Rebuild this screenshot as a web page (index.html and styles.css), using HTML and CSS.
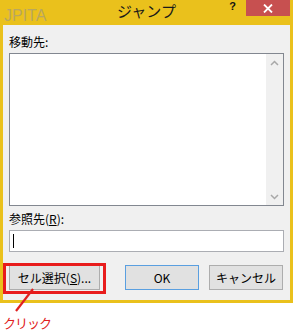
FILE: index.html
```html
<!DOCTYPE html>
<html lang="ja">
<head>
    <meta charset="UTF-8">
    <title>ジャンプ</title>
    <link rel="stylesheet" href="styles.css">
</head>
<body>
    <div class="window">
        <div class="titlebar">
            <span class="watermark">JPITA</span>
            <span class="title">ジャンプ</span>
            <div class="controls">
                <span class="help">?</span>
                <span class="close">
                    <svg width="10" height="9" viewBox="0 0 10 9"><path d="M1 0.5 L9 8.5 M9 0.5 L1 8.5" stroke="#fff" stroke-width="1.8" fill="none"/></svg>
                </span>
            </div>
        </div>
        <div class="client">
            <div class="label">移動先:</div>
            <div class="listbox">
                <div class="list-items"></div>
                <div class="scrollbar">
                    <span class="arrow">
                        <svg width="9" height="6" viewBox="0 0 9 6"><path d="M1 5 L4.5 1.5 L8 5" stroke="#a8a8a8" stroke-width="1.5" fill="none"/></svg>
                    </span>
                    <span class="track"></span>
                    <span class="arrow">
                        <svg width="9" height="6" viewBox="0 0 9 6"><path d="M1 1 L4.5 4.5 L8 1" stroke="#a8a8a8" stroke-width="1.5" fill="none"/></svg>
                    </span>
                </div>
            </div>
            <div class="label label-ref">参照先(<u>R</u>):</div>
            <div class="textbox"><span class="caret"></span></div>
            <div class="buttons">
                <button type="button" class="btn btn-pick">セル選択(<u>S</u>)...</button>
                <button type="button" class="btn btn-default">OK</button>
                <button type="button" class="btn">キャンセル</button>
            </div>
        </div>
    </div>
    <div class="note">クリック</div>

    <!-- 注釈の矢印線 -->
    <svg class="pointer" width="293" height="331" viewBox="0 0 293 331">
        <line x1="33" y1="289" x2="16" y2="311" stroke="#e02020" stroke-width="2.2"/>
    </svg>
</body>
</html>
```

FILE: styles.css
```css
body {
    margin: 0;
    width: 293px;
    height: 331px;
    background-color: #ffffff;
    font-family: "Noto Sans CJK JP", "Noto Sans", sans-serif;
    color: #000000;
    position: relative;
    overflow: hidden;
}
.window {
    background-color: #eac11c; /* タイトルバーと枠の色 */
    padding: 0 3px 3px 3px;
}
.titlebar {
    height: 25px;
    display: grid;
    grid-template-columns: 1fr auto 1fr;
    align-items: start;
}
.watermark {
    font-family: "Liberation Sans", sans-serif;
    font-size: 16px;
    line-height: 16px;
    color: #b9a75e;
    padding-top: 8px;
    padding-left: 1px;
}
.title {
    font-size: 15px;
    line-height: 22px;
    color: #1a1a1a;
}
.controls {
    display: flex;
    justify-content: flex-end;
    align-items: flex-start;
}
.help {
    font-family: "Liberation Sans", sans-serif;
    font-weight: bold;
    font-size: 11px;
    line-height: 12px;
    margin-right: 10px;
    color: #111111;
}
.close {
    width: 44px;
    height: 16px;
    background-color: #c75050;
    display: flex;
    align-items: center;
    justify-content: center;
}
.client {
    background-color: #f0f0f0;
    padding: 8px 6px 10px 6px;
    display: flex;
    flex-direction: column;
}
.label {
    font-size: 12px;
    line-height: 18px;
    margin-bottom: 2px;
}
.label-ref {
    margin-top: 4px;
}
.listbox {
    height: 151px;
    border: 1px solid #828790;
    background-color: #ffffff;
    display: flex;
}
.list-items {
    flex: 1;
}
.scrollbar {
    width: 17px;
    background-color: #f0f0f0;
    display: flex;
    flex-direction: column;
}
.arrow {
    height: 17px;
    display: flex;
    align-items: center;
    justify-content: center;
}
.track {
    flex: 1;
}
.textbox {
    height: 20px;
    border: 1px solid #abadb3;
    background-color: #ffffff;
    display: flex;
    align-items: center;
    padding-left: 3px;
}
.caret {
    width: 1px;
    height: 14px;
    background-color: #000000;
}
.buttons {
    display: flex;
    gap: 10px;
    margin-top: 13px;
    padding-right: 1px;
}
.btn {
    height: 25px;
    width: 74px;
    padding: 0;
    background-color: #e1e1e1;
    border: 1px solid #adadad;
    font-family: "Noto Sans CJK JP", "Noto Sans", sans-serif;
    font-size: 12px;
    color: #000000;
}
.btn-pick {
    width: 91px;
    margin-right: auto;
    position: relative;
}
/* 赤い枠の注釈 */
.btn-pick::after {
    content: "";
    position: absolute;
    top: -3px;
    left: -7px;
    right: -7px;
    bottom: -5px;
    border: 3px solid #e81c1c;
}
.btn-default {
    border-color: #5a9fe0;
}
.note {
    margin-top: 12px;
    padding-left: 3px;
    font-size: 13px;
    line-height: 16px;
    letter-spacing: -1px;
    color: #e02020;
}
.pointer {
    position: absolute;
    top: 0;
    left: 0;
    pointer-events: none;
}
```
